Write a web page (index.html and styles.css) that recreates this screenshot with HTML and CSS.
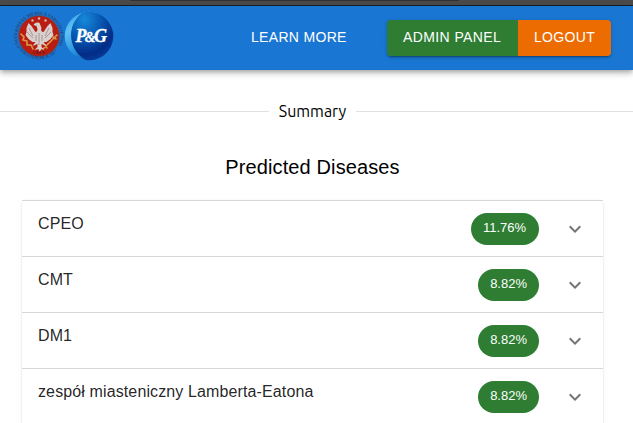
FILE: index.html
```
<!DOCTYPE html>
<html lang="en">
<head>
<meta charset="utf-8">
<title>Summary</title>
<link rel="stylesheet" href="styles.css">
</head>
<body>
<div class="window-edge"><div class="edge-shade"></div></div>
<header class="app-bar">
  <div class="logos">
    <svg class="seal" viewBox="0 0 50 50">
      <defs>
        <path id="arc-top" d="M6.2 36A21.6 21.6 0 1 1 43.8 36"/>
        <path id="arc-bottom" d="M4.5 37A24.3 24.3 0 0 0 45.5 37"/>
      </defs>
      <circle cx="25" cy="25" r="20.3" fill="#b91d12" stroke="#704048" stroke-width=".7"/>
      <g class="seal-text"><text textLength="88" lengthAdjust="spacingAndGlyphs"><textPath href="#arc-top">UNIVERSITAS MEDICA VARSOVIENSIS</textPath></text>
      <text textLength="45"><textPath href="#arc-bottom">• SALUTI PUBLICAE •</textPath></text></g>
      <g stroke="#d99a4b" stroke-width="1.6" fill="none" stroke-linecap="round">
        <path d="M7 23l3 3-1 3 4 1 0 4 4 0 2 4M43 24l-3 3-6 6-5 5M39 26l3 2M31 34l2 3"/>
      </g>
      <path fill="#d9d0ce" d="M25.500 12c-3-1-5 0-6 2l3 1 1 3c0 2-1 3-2 3l-4-6-3-3-2 5 0 4-1 3 3 4 4 3 3 0-3 4 5-2 0 3-3 3 4-1 1 3 2-3 3 1-3-3 0-3 5 2-3-4 3 0 4-3 3-4-1-3 0-4-2-5-3 3-4 6c-2 0-3-2-2-4z"/>
      <path d="M15 17l4 8M13 21l6 6M35 17l-4 8M37 21l-6 6M22 24v6M28 24v6M25 22v12" stroke="#987c7b" stroke-width=".7"/>
      <g fill="#d9b5aa"><circle cx="18.500" cy="9.500" r="1.200"/><circle cx="25" cy="7.500" r="1.200"/><circle cx="31.500" cy="9.500" r="1.200"/></g>
      <text class="year" x="18.5" y="42.8">1809</text>
    </svg>
    <svg class="pg" viewBox="0 0 50 50">
      <defs>
        <linearGradient id="rim" x1="0" y1="0" x2=".7" y2="1"><stop offset="0" stop-color="#2597df"/><stop offset=".3" stop-color="#61c3f3"/><stop offset=".65" stop-color="#2492dc"/><stop offset="1" stop-color="#08429c"/></linearGradient>
        <radialGradient id="ball" cx=".32" cy=".16" r=".9"><stop offset="0" stop-color="#1689d8"/><stop offset=".45" stop-color="#0756b1"/><stop offset=".8" stop-color="#032d87"/><stop offset="1" stop-color="#073c9a"/></radialGradient>
      </defs>
      <circle cx="25" cy="25" r="24.2" fill="url(#rim)"/>
      <path fill="url(#ball)" d="M25 .8A24.2 24.2 0 1 1 22 49C5 40 1 15 18 2A24 24 0 0 1 25 .8"/>
      <text class="pg-text" y="31"><tspan x="11.500">P</tspan><tspan class="amp" x="20.800">&amp;</tspan><tspan x="30">G</tspan></text>
    </svg>
  </div>
  <nav class="actions">
    <a class="learn">LEARN MORE</a>
    <div class="button-group"><button class="admin">ADMIN PANEL</button><button class="logout">LOGOUT</button></div>
  </nav>
</header>
<main>
  <div class="divider"><span>Summary</span></div>
  <h1>Predicted Diseases</h1>
  <section class="list">
    <div class="row"><span class="name">CPEO</span><span class="chip wide">11.76%</span><svg class="chevron" viewBox="0 0 24 24"><path d="M16.59 8.59 12 13.17 7.41 8.59 6 10l6 6 6-6z"/></svg></div>
    <div class="row"><span class="name">CMT</span><span class="chip">8.82%</span><svg class="chevron" viewBox="0 0 24 24"><path d="M16.59 8.59 12 13.17 7.41 8.59 6 10l6 6 6-6z"/></svg></div>
    <div class="row"><span class="name">DM1</span><span class="chip">8.82%</span><svg class="chevron" viewBox="0 0 24 24"><path d="M16.59 8.59 12 13.17 7.41 8.59 6 10l6 6 6-6z"/></svg></div>
    <div class="row"><span class="name">zespół miasteniczny Lamberta-Eatona</span><span class="chip">8.82%</span><svg class="chevron" viewBox="0 0 24 24"><path d="M16.59 8.59 12 13.17 7.41 8.59 6 10l6 6 6-6z"/></svg></div>
  </section>
</main>
</body>
</html>
```
FILE: styles.css
```
* { box-sizing: border-box; }
html, body { height: 100%; }
body { margin: 0; overflow: hidden; background: #fff; color: #000; font-family: "Liberation Sans", Arial, sans-serif; }
.window-edge { height: 6px; background: #4b4b4b; border-bottom: 1px solid #1b2024; }
.edge-shade { height: 1px; width: 329px; margin-left: 130px; background: #333; }
.app-bar { position: relative; z-index: 1; height: 64px; display: flex; justify-content: space-between; background: #1976d2; padding: 0 22px 0 14px; box-shadow: 0 2px 4px -1px rgba(0,0,0,.2), 0 4px 5px rgba(0,0,0,.14), 0 1px 10px rgba(0,0,0,.12); }
main { height: calc(100vh - 70px); overflow: hidden; display: flow-root; }
.logos { display: flex; padding-top: 5px; }
.seal, .pg { width: 50px; height: 50px; display: block; overflow: visible; }
.seal-text { font: 700 4.6px "Liberation Serif", serif; fill: #254777; }
.year { font: 700 4.5px "Liberation Serif", serif; fill: #5b1616; letter-spacing: .9px; }
.pg-text { font: italic 700 18px "Liberation Serif", serif; fill: #fff; stroke: #fff; stroke-width: .35px; }
.amp { font-size: 14px; }
.actions { display: flex; padding-top: 14px; height: 50px; }
.learn, button { font-size: 14px; line-height: 24px; letter-spacing: .32px; color: #fff; white-space: nowrap; }
.learn { padding: 5px 0; width: 136px; }
.button-group { display: flex; height: 36px; width: 224px; border-radius: 4px; box-shadow: 0 3px 1px -2px rgba(0,0,0,.2), 0 2px 2px rgba(0,0,0,.14), 0 1px 5px rgba(0,0,0,.12); }
button { border: 0; font-family: inherit; padding: 4px 0 6px 16px; text-align: left; }
.admin { width: 131px; background: #2e7d32; border-radius: 4px 0 0 4px; letter-spacing: .4px; }
.logout { width: 93px; background: #ed6c02; border-radius: 0 4px 4px 0; }
.divider { display: flex; align-items: center; height: 24px; margin-top: 29px; font: 16px/24px Ubuntu, "Noto Sans", sans-serif; }
.divider::before, .divider::after { content: ""; height: 1px; background: #e0e0e0; }
.divider::before { width: 269px; }
.divider::after { flex: 1; }
.divider span { width: 87px; text-align: center; }
h1 { margin: 28px 0 0; font-size: 20px; line-height: 32px; font-weight: 400; letter-spacing: .12px; text-align: center; padding-right: 8px; }
.list { margin: 17px 30px 0 22px; border-radius: 4px 4px 0 0; box-shadow: 0 2px 1px -1px rgba(0,0,0,.2), 0 1px 1px rgba(0,0,0,.14), 0 1px 3px rgba(0,0,0,.12); }
.row { height: 56px; display: flex; align-items: center; padding: 1px 16px 0; border-top: 1px solid #d8d8d8; }
.name { flex: 1; align-self: flex-start; margin-top: 10px; font-size: 16px; line-height: 24px; letter-spacing: .12px; color: rgba(0,0,0,.87); }
.chip { height: 32px; border-radius: 16px; padding: 0 12px; background: #2e7d32; color: #fff; font-size: 13px; line-height: 30px; }
.wide { width: 68px; }
.chevron { width: 24px; height: 24px; margin-left: 24px; fill: #757575; }
```
